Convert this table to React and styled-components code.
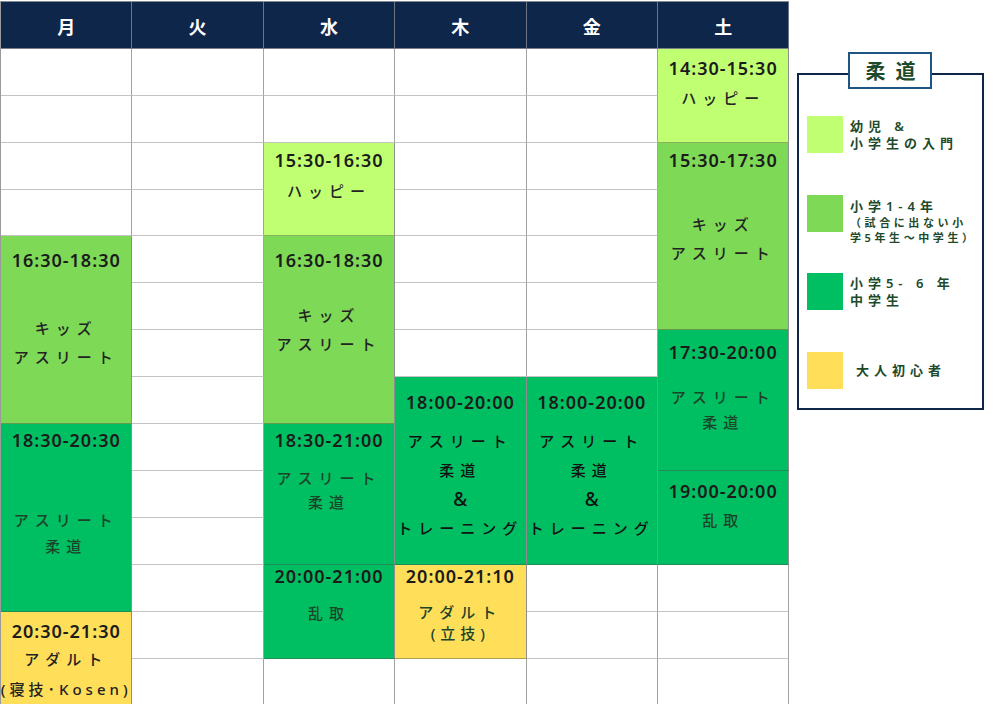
import React from 'react';
import styled, { createGlobalStyle } from 'styled-components';

const COLORS = {
  light: '#c1ff72',
  mid: '#7ed957',
  green: '#00bf63',
  yellow: '#ffde59',
};

const TONES = {
  ink: '#232323',
  black: '#121212',
  green: '#1b4529',
};

const Global = createGlobalStyle`
  html, body { margin: 0; padding: 0; background: #ffffff; }
  body { font-family: "Noto Sans", "Noto Sans CJK JP", sans-serif; }
`;

const Page = styled.div`
  display: flex;
  align-items: flex-start;
  gap: 7.6px;
  padding-top: 1px;
  width: 993px;
  height: 704px;
  overflow: hidden;
  box-sizing: border-box;
`;

const Timetable = styled.div`
  flex: none;
  display: grid;
  grid-template-columns: repeat(6, 131.4px);
  grid-template-rows: 46.7px repeat(14, 46.95px);
  border-left: 1px solid #9a9a9a;
  border-top: 1px solid #858a93;
`;

const DayHead = styled.div`
  grid-row: 1;
  grid-column: ${p => p.$col + 1};
  display: flex;
  align-items: center;
  justify-content: center;
  padding-top: 2px;
  box-sizing: border-box;
  background: #0f264b;
  color: #ffffff;
  font-family: "Noto Sans CJK JP", sans-serif;
  font-size: 18px;
  font-weight: 700;
  border-right: 1px solid #6d7484;
  border-bottom: 1px solid #7a7f88;
`;

const EmptySlot = styled.div`
  grid-column: ${p => p.$col + 1};
  grid-row: ${p => p.$row + 2};
  background: #ffffff;
  border-right: 1px solid #a2a2a2;
  border-bottom: 1px solid #c4c4c4;
`;

const Session = styled.div`
  grid-column: ${p => p.$col + 1};
  grid-row: ${p => p.$row + 2} / span ${p => p.$span};
  background: ${p => COLORS[p.$kind]};
  border-right: 1px solid #8e8e8e;
  border-bottom: 1px solid rgba(70, 80, 70, 0.45);
  display: flex;
  flex-direction: column;
  align-items: center;
  padding-top: ${p => p.$pad}px;
  box-sizing: border-box;
  min-width: 0;
  overflow: visible;
  position: relative;
  z-index: 1;
`;

const Time = styled.div`
  font-family: "Noto Sans", sans-serif;
  font-size: 18px;
  font-weight: 600;
  letter-spacing: 1px;
  line-height: 22px;
  color: #1b1b1b;
  white-space: nowrap;
`;

const Labels = styled.div`
  margin-top: ${p => p.$offset - 11 - p.$lh / 2}px;
  display: flex;
  flex-direction: column;
  align-items: center;
`;

const Label = styled.div`
  font-family: "Noto Sans", "Noto Sans CJK JP", sans-serif;
  font-size: ${p => p.$size}px;
  font-weight: 500;
  letter-spacing: ${p => p.$ls}px;
  line-height: ${p => p.$lh}px;
  color: ${p => TONES[p.$tone]};
  white-space: nowrap;
`;

const LegendBox = styled.div`
  flex: none;
  position: relative;
  margin-top: 72px;
  width: 187px;
  height: 337px;
  box-sizing: border-box;
  border: 2px solid #0f2548;
  padding: 41px 0 0 8px;
  display: flex;
  flex-direction: column;
  gap: 41.5px;
`;

const Badge = styled.div`
  position: absolute;
  top: -23px;
  left: 50%;
  transform: translateX(-50%);
  width: 84px;
  height: 37px;
  box-sizing: border-box;
  border: 2px solid #1f5582;
  background: #ffffff;
  display: flex;
  align-items: center;
  justify-content: center;
  padding-left: 10px;
  font-family: "Noto Sans CJK JP", sans-serif;
  font-size: 20px;
  font-weight: 700;
  letter-spacing: 10px;
  color: #1d4a2b;
`;

const LegendItem = styled.div`
  display: flex;
  align-items: ${p => (p.$top ? 'flex-start' : 'center')};
  gap: 7px;
  height: 37px;
`;

const Swatch = styled.div`
  flex: none;
  width: 36px;
  height: 37px;
  background: ${p => COLORS[p.$kind]};
`;

const LegendText = styled.div`
  margin-top: ${p => p.$mt || 0}px;
  margin-left: ${p => p.$ml || 0}px;
  display: flex;
  flex-direction: column;
  font-family: "Noto Sans", "Noto Sans CJK JP", sans-serif;
  color: #1d4a2b;
  white-space: nowrap;
`;

const LegendLine = styled.div`
  font-size: ${p => (p.$small ? 11 : 13)}px;
  font-weight: 600;
  letter-spacing: ${p => (p.$small ? 3.6 : 5)}px;
  line-height: ${p => (p.$small ? 15 : 17)}px;
`;

const DAYS = ['月', '火', '水', '木', '金', '土'];

const SESSIONS = [
  { col: 5, row: 0, span: 2, kind: 'light', pad: 8, time: '14:30-15:30', offset: 30, lh: 28, tone: 'ink', lines: ['ハッピー'] },
  { col: 2, row: 2, span: 2, kind: 'light', pad: 6, time: '15:30-16:30', offset: 31, lh: 28, tone: 'ink', lines: ['ハッピー'] },
  { col: 5, row: 2, span: 4, kind: 'mid', pad: 6, time: '15:30-17:30', offset: 65, lh: 29, tone: 'ink', lines: ['キッズ', 'アスリート'] },
  { col: 0, row: 4, span: 4, kind: 'mid', pad: 13, time: '16:30-18:30', offset: 68, lh: 29, tone: 'ink', lines: ['キッズ', 'アスリート'] },
  { col: 2, row: 4, span: 4, kind: 'mid', pad: 13, time: '16:30-18:30', offset: 55, lh: 29, tone: 'ink', lines: ['キッズ', 'アスリート'] },
  { col: 5, row: 6, span: 3, kind: 'green', pad: 11, time: '17:30-20:00', offset: 45, lh: 25, tone: 'green', lines: ['アスリート', '柔道'] },
  { col: 3, row: 7, span: 4, kind: 'green', pad: 14, time: '18:00-20:00', offset: 39, lh: 29, tone: 'black', lines: ['アスリート', '柔道', '&', 'トレーニング'] },
  { col: 4, row: 7, span: 4, kind: 'green', pad: 14, time: '18:00-20:00', offset: 39, lh: 29, tone: 'black', lines: ['アスリート', '柔道', '&', 'トレーニング'] },
  { col: 0, row: 8, span: 4, kind: 'green', pad: 5, time: '18:30-20:30', offset: 80, lh: 26, tone: 'green', lines: ['アスリート', '柔道'] },
  { col: 2, row: 8, span: 3, kind: 'green', pad: 5, time: '18:30-21:00', offset: 38, lh: 24, tone: 'green', lines: ['アスリート', '柔道'] },
  { col: 5, row: 9, span: 2, kind: 'green', pad: 9, time: '19:00-20:00', offset: 29, lh: 26, tone: 'green', lines: ['乱取'] },
  { col: 2, row: 11, span: 2, kind: 'green', pad: 0, time: '20:00-21:00', offset: 37, lh: 26, tone: 'green', lines: ['乱取'] },
  { col: 3, row: 11, span: 2, kind: 'yellow', pad: 0, time: '20:00-21:10', offset: 36, lh: 21, tone: 'green', lines: ['アダルト', { text: '(立技)', ls: 5 }] },
  { col: 0, row: 12, span: 2, kind: 'yellow', pad: 8, time: '20:30-21:30', offset: 28, lh: 30, tone: 'ink', lines: ['アダルト', { text: '(寝技･Kosen)', ls: 4 }] },
];

const ROWS = 14;

function emptySlots() {
  const taken = DAYS.map(() => new Array(ROWS).fill(false));
  SESSIONS.forEach(s => {
    for (let r = s.row; r < s.row + s.span; r += 1) taken[s.col][r] = true;
  });
  const out = [];
  taken.forEach((rows, col) => {
    rows.forEach((isTaken, row) => {
      if (!isTaken) out.push({ col, row });
    });
  });
  return out;
}

export default function App() {
  return (
    <>
      <Global />
      <Page>
        <Timetable>
          {DAYS.map((d, i) => (
            <DayHead key={d} $col={i}>{d}</DayHead>
          ))}
          {emptySlots().map(({ col, row }) => (
            <EmptySlot key={`e-${col}-${row}`} $col={col} $row={row} />
          ))}
          {SESSIONS.map(s => (
            <Session key={`${s.col}-${s.row}`} $col={s.col} $row={s.row} $span={s.span} $kind={s.kind} $pad={s.pad}>
              <Time>{s.time}</Time>
              <Labels $offset={s.offset} $lh={s.lh}>
                {s.lines.map((l, i) => {
                  const text = typeof l === 'string' ? l : l.text;
                  const isAmp = text === '&';
                  const ls = typeof l === 'string' ? (isAmp ? 0 : 6) : l.ls;
                  return (
                    <Label key={i} $ls={ls} $lh={s.lh} $size={isAmp ? 19 : 15} $tone={s.tone}>{text}</Label>
                  );
                })}
              </Labels>
            </Session>
          ))}
        </Timetable>

        <LegendBox>
          <Badge>柔道</Badge>
          <LegendItem>
            <Swatch $kind="light" />
            <LegendText>
              <LegendLine>幼児 &amp;</LegendLine>
              <LegendLine>小学生の入門</LegendLine>
            </LegendText>
          </LegendItem>
          <LegendItem $top>
            <Swatch $kind="mid" />
            <LegendText $mt={3.5}>
              <LegendLine>小学1-4年</LegendLine>
              <LegendLine $small>（試合に出ない小</LegendLine>
              <LegendLine $small>学5年生～中学生）</LegendLine>
            </LegendText>
          </LegendItem>
          <LegendItem>
            <Swatch $kind="green" />
            <LegendText>
              <LegendLine>小学5- 6 年</LegendLine>
              <LegendLine>中学生</LegendLine>
            </LegendText>
          </LegendItem>
          <LegendItem>
            <Swatch $kind="yellow" />
            <LegendText $ml={6}>
              <LegendLine>大人初心者</LegendLine>
            </LegendText>
          </LegendItem>
        </LegendBox>
      </Page>
    </>
  );
}
